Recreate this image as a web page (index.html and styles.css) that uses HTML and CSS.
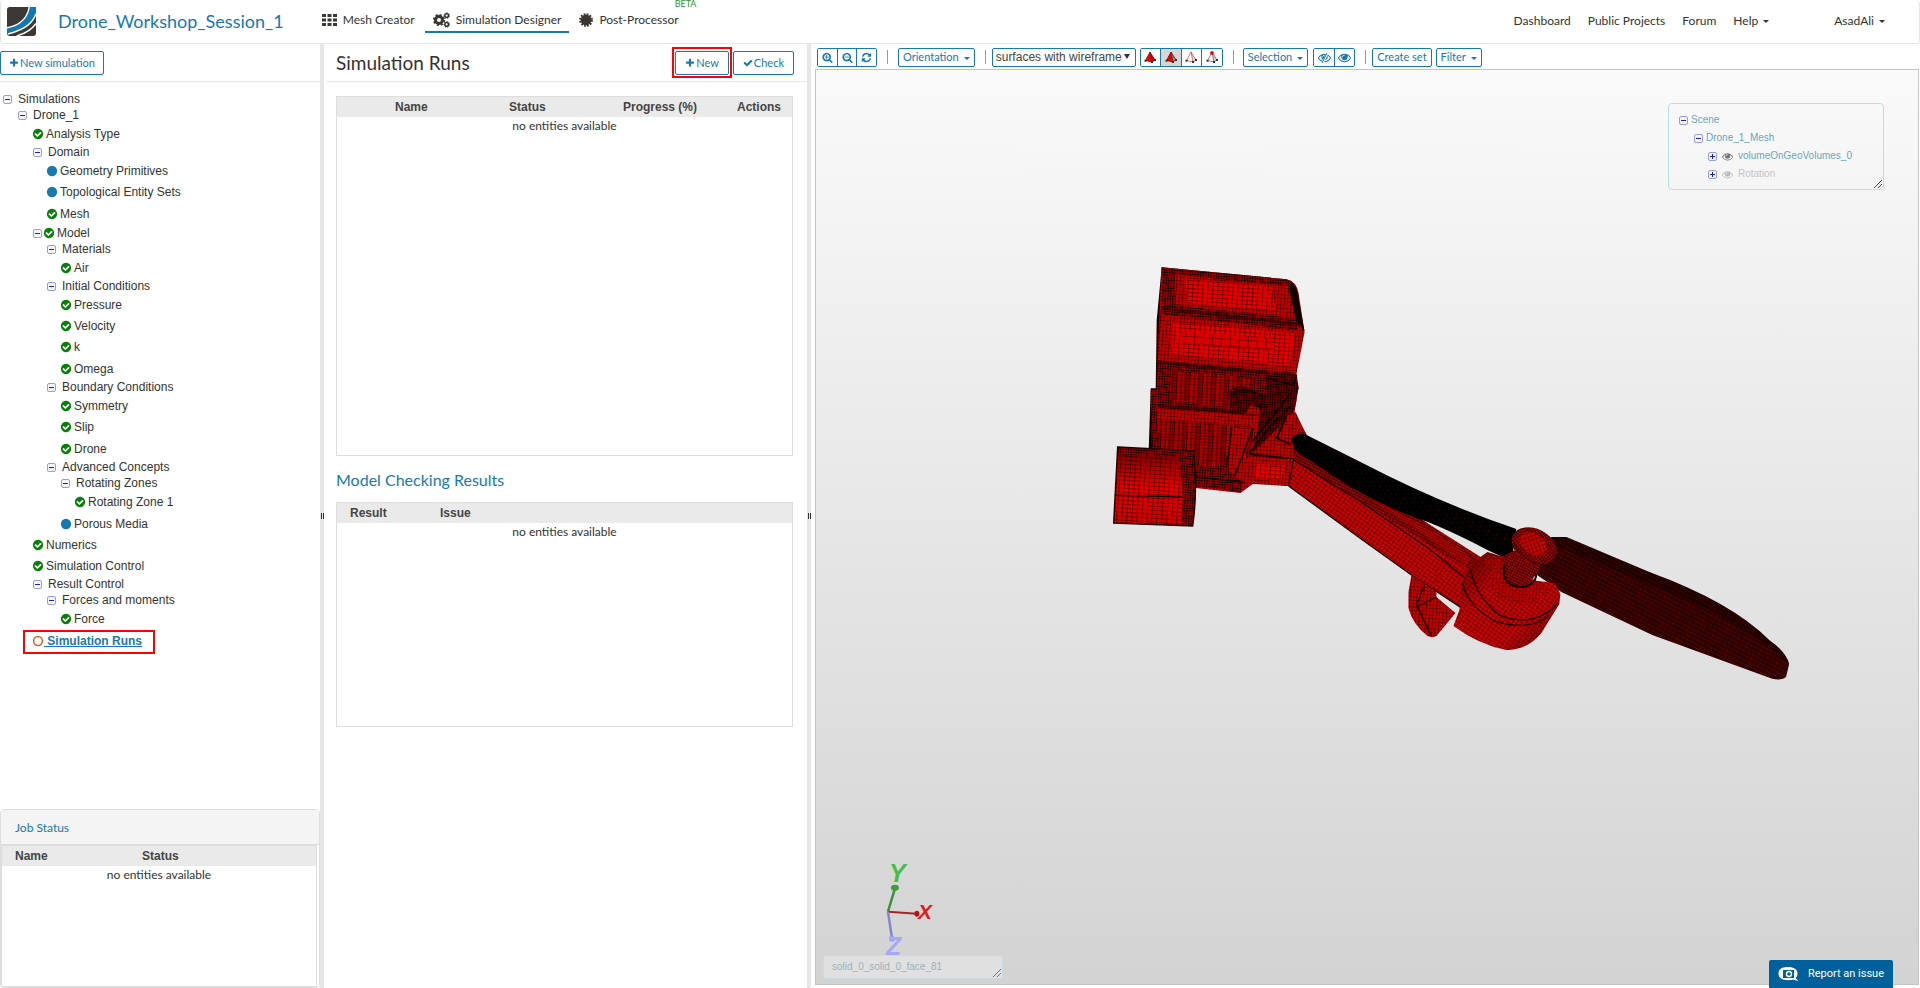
FILE: index.html
```html
<!DOCTYPE html>
<html lang="en">
<head>
<meta charset="utf-8">
<title>Drone_Workshop_Session_1</title>
<link rel="stylesheet" href="styles.css">
</head>
<body>
<svg class="sprite" aria-hidden="true">
  <symbol id="ok" viewBox="0 0 1792 1792"><path d="M1412 734q0-28-18-46l-91-90q-19-19-45-19t-45 19l-408 407-226-226q-19-19-45-19t-45 19l-91 90q-18 18-18 46 0 27 18 45l362 362q19 19 45 19 27 0 46-19l543-543q18-18 18-45zm252 162q0 209-103 385.5t-279.5 279.5-385.5 103-385.5-103-279.5-279.5-103-385.5 103-385.5 279.5-279.5 385.5-103 385.5 103 279.5 279.5 103 385.5z"/></symbol>
  <symbol id="dot" viewBox="0 0 1792 1792"><circle cx="896" cy="896" r="768"/></symbol>
  <symbol id="ring" viewBox="0 0 1792 1792"><circle cx="896" cy="896" r="656" fill="none" stroke="currentColor" stroke-width="224"/></symbol>
  <symbol id="plus" viewBox="0 0 1792 1792"><path d="M1600 736v192q0 40-28 68t-68 28h-416v416q0 40-28 68t-68 28h-192q-40 0-68-28t-28-68v-416h-416q-40 0-68-28t-28-68v-192q0-40 28-68t68-28h416v-416q0-40 28-68t68-28h192q40 0 68 28t28 68v416h416q40 0 68 28t28 68z"/></symbol>
  <symbol id="check" viewBox="0 0 1792 1792"><path d="M1671 566q0 40-28 68l-724 724-136 136q-28 28-68 28t-68-28l-136-136-362-362q-28-28-28-68t28-68l136-136q28-28 68-28t68 28l294 295 656-657q28-28 68-28t68 28l136 136q28 28 28 68z"/></symbol>
  <symbol id="refresh" viewBox="0 0 1792 1792"><path d="M1639 1056q0 5-1 7-64 268-268 434.5t-478 166.5q-146 0-282.5-55t-243.5-157l-129 129q-19 19-45 19t-45-19-19-45v-448q0-26 19-45t45-19h448q26 0 45 19t19 45-19 45l-137 137q71 66 161 102t187 36q134 0 250-65t186-179q11-17 53-117 8-23 30-23h192q13 0 22.5 9.5t9.5 22.5zm25-800v448q0 26-19 45t-45 19h-448q-26 0-45-19t-19-45 19-45l138-138q-148-137-349-137-134 0-250 65t-186 179q-11 17-53 117-8 23-30 23h-199q-13 0-22.5-9.5t-9.5-22.5v-7q65-268 270-434.5t480-166.5q146 0 284 55.5t245 156.5l130-129q19-19 45-19t45 19 19 45z"/></symbol>
  <symbol id="lens" viewBox="0 0 1792 1792"><path d="M1216 832q0-185-131.500-316.500t-316.500-131.500-316.500 131.500-131.500 316.500 131.500 316.500 316.500 131.500 316.500-131.500 131.500-316.500zm512 832q0 53-37.500 90.500t-90.500 37.500q-54 0-90-38l-343-342q-179 124-399 124-143 0-273.500-55.500t-225-150-150-225-55.500-273.500 55.500-273.500 150-225 225-150 273.500-55.500 273.500 55.500 225 150 150 225 55.500 273.500q0 220-124 399l343 343q37 37 37 90z"/></symbol>
  <symbol id="eye" viewBox="0 0 1792 1792"><path d="M1664 960q-152-236-381-353 61 104 61 225 0 185-131.500 316.500t-316.500 131.500-316.500-131.500-131.500-316.500q0-121 61-225-229 117-381 353 133 205 333.500 326.500t434.500 121.500 434.500-121.500 333.500-326.500zm-720-384q0-20-14-34t-34-14q-125 0-214.500 89.500t-89.500 214.500q0 20 14 34t34 14 34-14 14-34q0-86 61-147t147-61q20 0 34-14t14-34zm848 384q0 34-20 69-140 230-376.500 368.500t-499.500 138.500-499.500-139-376.500-368q-20-35-20-69t20-69q140-229 376.500-368t499.500-139 499.500 139 376.500 368q20 35 20 69z"/></symbol>
  <symbol id="grid" viewBox="0 0 15 12"><path d="M0 0h4v3H0zM5.500 0h4v3h-4zM11 0h4v3h-4zM0 4.500h4v3H0zM5.500 4.500h4v3h-4zM11 4.500h4v3h-4zM0 9h4v3H0zM5.500 9h4v3h-4zM11 9h4v3h-4z"/></symbol>
  <symbol id="gears" viewBox="0 0 17 16"><g fill="none" stroke="currentColor"><circle cx="6" cy="8" r="3.500" stroke-width="3"/><circle cx="6" cy="8" r="5.200" stroke-width="1.800" stroke-dasharray="2.040 2.040"/><circle cx="13.700" cy="3.600" r="1.800" stroke-width="1.500"/><circle cx="13.700" cy="3.600" r="2.800" stroke-width="1" stroke-dasharray="1.250 1.250"/><circle cx="13.700" cy="12.400" r="1.800" stroke-width="1.500"/><circle cx="13.700" cy="12.400" r="2.800" stroke-width="1" stroke-dasharray="1.250 1.250"/></g></symbol>
  <symbol id="burst" viewBox="0 0 14 14"><circle cx="7" cy="7" r="5.400"/><circle cx="7" cy="7" r="5.900" fill="none" stroke="currentColor" stroke-width="2" stroke-dasharray="1.760 1.330"/></symbol>
  <symbol id="minusbox" viewBox="0 0 9 9"><rect x=".5" y=".5" width="8" height="8" rx="1.500" fill="#f4f4fc" stroke="#98a0d4"/><path d="M2 4.500h5" stroke="#2020b8" stroke-width="1"/></symbol>
  <symbol id="plusbox" viewBox="0 0 9 9"><rect x=".5" y=".5" width="8" height="8" rx="1.500" fill="#f4f4fc" stroke="#98a0d4"/><path d="M2 4.500h5M4.500 2v5" stroke="#2020c8" stroke-width="1"/></symbol>
  <symbol id="pyramid" viewBox="0 0 12 12"><path d="M6 1 1.500 9.500 8 11z" fill="var(--left)"/><path d="M6 1 8 11l3-2z" fill="var(--right)"/><path d="M6 1 1.500 9.500 8 11l3-2zM6 1l2 10" fill="none" stroke="var(--line)" stroke-width=".7"/><path d="M.5 8.700h2v2h-2zM7 10h2v2H7zM10 8h2v2h-2z" fill="#333"/><circle cx="6" cy="1.900" r="1.900" fill="var(--tip)"/></symbol>
</svg>

<header class="navbar">
  <a class="logo" href="#" aria-label="Home"><svg viewBox="0 0 30 30"><rect width="30" height="30" rx="3" fill="#3d3834"/><path d="M30 0v8C26 18 18 22 3 27l-3 1v-6C14 19 21 12 23 0z" fill="#1278b4"/><path d="M23 0C21 12 14 19 0 21.500M30 7C26 18 18 23 1 28M30 17c-4 6-10 10-20 13" fill="none" stroke="#fff" stroke-width="1.500"/></svg></a>
  <a class="project" href="#">Drone_Workshop_Session_1</a>
  <nav class="modes">
    <a class="mode" href="#"><svg class="i-grid"><use href="#grid"/></svg>Mesh Creator</a>
    <a class="mode active" href="#"><svg class="i-gears"><use href="#gears"/></svg>Simulation Designer</a>
    <a class="mode" href="#"><svg class="i-burst"><use href="#burst"/></svg>Post-Processor<sup class="beta">BETA</sup></a>
  </nav>
  <nav class="links">
    <a href="#">Dashboard</a><a href="#">Public Projects</a><a href="#">Forum</a><a href="#">Help<i class="caret"></i></a><a class="user" href="#">AsadAli<i class="caret"></i></a>
  </nav>
</header>

<main class="workspace">
  <aside class="sidebar">
    <div class="bar"><button class="btn"><svg><use href="#plus"/></svg>New simulation</button></div>
    <ul class="tree">
      <li class="node"><div class="folder"><svg class="box"><use href="#minusbox"/></svg>Simulations</div>
      <ul class="wide">
        <li class="node"><div class="folder"><svg class="box"><use href="#minusbox"/></svg>Drone_1</div>
        <ul class="wide">
          <li class="leaf"><svg class="ok"><use href="#ok"/></svg>Analysis Type</li>
          <li class="node"><div class="folder"><svg class="box"><use href="#minusbox"/></svg>Domain</div>
            <ul>
              <li class="leaf"><svg class="dot"><use href="#dot"/></svg>Geometry Primitives</li>
              <li class="leaf"><svg class="dot"><use href="#dot"/></svg>Topological Entity Sets</li>
              <li class="leaf"><svg class="ok"><use href="#ok"/></svg>Mesh</li>
            </ul></li>
          <li class="node"><div class="folder model"><svg class="box"><use href="#minusbox"/></svg><svg class="ok"><use href="#ok"/></svg>Model</div>
            <ul>
              <li class="node"><div class="folder"><svg class="box"><use href="#minusbox"/></svg>Materials</div>
                <ul><li class="leaf"><svg class="ok"><use href="#ok"/></svg>Air</li></ul></li>
              <li class="node"><div class="folder"><svg class="box"><use href="#minusbox"/></svg>Initial Conditions</div>
                <ul>
                  <li class="leaf"><svg class="ok"><use href="#ok"/></svg>Pressure</li>
                  <li class="leaf"><svg class="ok"><use href="#ok"/></svg>Velocity</li>
                  <li class="leaf"><svg class="ok"><use href="#ok"/></svg>k</li>
                  <li class="leaf"><svg class="ok"><use href="#ok"/></svg>Omega</li>
                </ul></li>
              <li class="node"><div class="folder"><svg class="box"><use href="#minusbox"/></svg>Boundary Conditions</div>
                <ul>
                  <li class="leaf"><svg class="ok"><use href="#ok"/></svg>Symmetry</li>
                  <li class="leaf"><svg class="ok"><use href="#ok"/></svg>Slip</li>
                  <li class="leaf"><svg class="ok"><use href="#ok"/></svg>Drone</li>
                </ul></li>
              <li class="node"><div class="folder"><svg class="box"><use href="#minusbox"/></svg>Advanced Concepts</div>
                <ul>
                  <li class="node"><div class="folder"><svg class="box"><use href="#minusbox"/></svg>Rotating Zones</div>
                    <ul><li class="leaf"><svg class="ok"><use href="#ok"/></svg>Rotating Zone 1</li></ul></li>
                  <li class="leaf"><svg class="dot"><use href="#dot"/></svg>Porous Media</li>
                </ul></li>
            </ul></li>
          <li class="leaf"><svg class="ok"><use href="#ok"/></svg>Numerics</li>
          <li class="leaf"><svg class="ok"><use href="#ok"/></svg>Simulation Control</li>
          <li class="node"><div class="folder"><svg class="box"><use href="#minusbox"/></svg>Result Control</div>
            <ul>
              <li class="node"><div class="folder"><svg class="box"><use href="#minusbox"/></svg>Forces and moments</div>
                <ul><li class="leaf"><svg class="ok"><use href="#ok"/></svg>Force</li></ul></li>
            </ul></li>
          <li class="leaf"><a class="current" href="#"><svg class="ring"><use href="#ring"/></svg><span>&nbsp;Simulation Runs</span></a></li>
        </ul></li>
      </ul></li>
    </ul>
    <section class="jobs">
      <h3>Job Status</h3>
      <div class="tablebox jobbox">
        <table>
          <thead><tr><th class="c-job">Name</th><th>Status</th></tr></thead>
          <tbody><tr><td colspan="2">no entities available</td></tr></tbody>
        </table>
      </div>
    </section>
  </aside>

  <div class="splitter"><i></i></div>

  <section class="runs">
    <div class="bar runbar">
      <h2>Simulation Runs</h2>
      <button class="btn marked"><svg><use href="#plus"/></svg>New</button>
      <button class="btn"><svg><use href="#check"/></svg>Check</button>
    </div>
    <div class="tablebox runbox">
      <table>
        <thead><tr><th class="c-tick"></th><th class="c-run">Name</th><th class="c-run">Status</th><th class="c-run">Progress (%)</th><th>Actions</th></tr></thead>
        <tbody><tr><td colspan="5">no entities available</td></tr></tbody>
      </table>
    </div>
    <h3>Model Checking Results</h3>
    <div class="tablebox checkbox">
      <table>
        <thead><tr><th class="c-result">Result</th><th>Issue</th></tr></thead>
        <tbody><tr><td colspan="2">no entities available</td></tr></tbody>
      </table>
    </div>
  </section>

  <div class="splitter"><i></i></div>

  <section class="viewer">
    <div class="toolbar">
      <div class="group zoom">
        <button aria-label="Zoom in"><svg viewBox="0 0 13 13"><use href="#lens"/><path d="M3 6h5M5.500 3.500v5" stroke="currentColor"/></svg></button>
        <button aria-label="Zoom out"><svg viewBox="0 0 13 13"><use href="#lens"/><path d="M3 6h5" stroke="currentColor"/></svg></button>
        <button aria-label="Refresh"><svg><use href="#refresh"/></svg></button>
      </div>
      <i class="sep"></i>
      <button class="tool">Orientation<i class="caret"></i></button>
      <i class="sep"></i>
      <div class="toolset">
        <div class="picker"><select aria-label="Render mode"><option>surfaces with wireframe</option></select><i></i></div>
        <div class="group pick">
          <button class="p-volume" aria-label="Pick volumes"><svg><use href="#pyramid"/></svg></button>
          <button class="p-face on" aria-label="Pick faces"><svg><use href="#pyramid"/></svg></button>
          <button class="p-edge" aria-label="Pick edges"><svg><use href="#pyramid"/></svg></button>
          <button class="p-node" aria-label="Pick nodes"><svg><use href="#pyramid"/></svg></button>
        </div>
      </div>
      <i class="sep"></i>
      <div class="toolset wide-set">
        <button class="tool">Selection<i class="caret"></i></button>
        <div class="group eyes">
          <button aria-label="Hide selection"><svg viewBox="0 0 13 13"><use href="#eye"/><path d="M9.500 2 4.500 12" stroke="#fff" stroke-width="2"/><path d="M9 2 4 12" stroke="currentColor"/></svg></button>
          <button aria-label="Show all"><svg><use href="#eye"/></svg></button>
        </div>
      </div>
      <i class="sep"></i>
      <div class="toolset">
        <button class="tool">Create set</button>
        <button class="tool">Filter<i class="caret"></i></button>
      </div>
    </div>

    <div class="viewport">
      <svg class="scene" viewBox="816 70 1103 914" role="img" aria-label="Drone mesh">
        <defs>
          <pattern id="m2" width="2.600" height="2.600" patternUnits="userSpaceOnUse" patternTransform="rotate(4)"><rect width="3" height="3" fill="#a00000"/><path d="M0 0h3M0 0v3" stroke="#000" stroke-width="1.200"/></pattern>
          <pattern id="m3" width="3.400" height="3.400" patternUnits="userSpaceOnUse" patternTransform="rotate(4)"><rect width="4" height="4" fill="#c40000"/><path d="M0 0h4M0 0v4" stroke="#200" stroke-width="1"/></pattern>
          <pattern id="m5" width="5" height="4" patternUnits="userSpaceOnUse" patternTransform="rotate(4)"><rect width="5" height="4" fill="#e80000"/><path d="M0 0h5M0 0v4" stroke="#200" stroke-width="1.100"/></pattern>
          <pattern id="m9" width="9" height="7" patternUnits="userSpaceOnUse" patternTransform="rotate(4)"><rect width="9" height="7" fill="#d80000"/><path d="M0 0h9M0 0v7" stroke="#300" stroke-width="1"/></pattern>
          <pattern id="mv" width="13" height="3" patternUnits="userSpaceOnUse" patternTransform="rotate(3)"><rect width="13" height="3" fill="#b80000"/><rect x="8" width="5" height="3" fill="#8c0000"/><path d="M0 0h13M4 0v3M8 0v3M12.500 0v3" stroke="#200" stroke-width=".9"/></pattern>
          <pattern id="arm" width="4" height="3.600" patternUnits="userSpaceOnUse" patternTransform="rotate(35)"><rect width="4" height="4" fill="#d00000"/><path d="M0 0h4M0 0v4" stroke="#200" stroke-width="1"/></pattern>
          <pattern id="armd" width="2.600" height="2.600" patternUnits="userSpaceOnUse" patternTransform="rotate(25)"><rect width="3" height="3" fill="#b00000"/><path d="M0 0h3M0 0v3" stroke="#100" stroke-width="1.100"/></pattern>
          <pattern id="blade" width="5" height="4" patternUnits="userSpaceOnUse" patternTransform="rotate(27)"><rect width="5" height="4" fill="#800000"/><path d="M0 0h5M0 2h5M0 0l2.500 2M5 2 2.500 4M3 0v2M1 2v2" stroke="#000" stroke-width=".9"/></pattern>
          <pattern id="dark" width="9" height="5" patternUnits="userSpaceOnUse" patternTransform="rotate(27)"><rect width="9" height="5" fill="#000"/><rect x="1" y="1" width="1" height="1" fill="#500"/><rect x="6" y="3" width="1" height="1" fill="#300"/></pattern>
          <linearGradient id="shade" x1="0" x2="1" y1="0" y2="1"><stop offset="0" stop-color="#000" stop-opacity=".6"/><stop offset=".35" stop-color="#000" stop-opacity="0"/><stop offset=".7" stop-color="#000" stop-opacity="0"/><stop offset="1" stop-color="#000" stop-opacity=".55"/></linearGradient>
          <linearGradient id="rim" x1="0" x2="0" y1="0" y2="1"><stop offset="0" stop-color="#000" stop-opacity=".5"/><stop offset=".5" stop-color="#000" stop-opacity="0"/><stop offset="1" stop-color="#000" stop-opacity=".1"/></linearGradient>
        </defs>
        <!-- rear edge and body -->
        <path d="M1162 267 1157 320 1156 388h-5l-2 62 30 6 10-180z" fill="#1a0000"/>
        <path d="M1151 390h8v60l-7-2z" fill="url(#m2)"/>
        <path d="M1162 267 1287 279Q1297 281 1299 293L1305 332 1297 373 1299 387 1295 412 1310 440 1289 486 1253 484 1241 493 1196 488 1160 452 1157 410 1158 350z" fill="url(#m3)"/>
        <path d="M1162 267 1287 279Q1296 282 1298 292L1302 322 1163 307z" fill="url(#m2)"/>
        <path d="M1175 274 1289 286 1296 318 1176 305z" fill="url(#m3)"/>
        <path d="M1186 278 1272 287 1277 311 1187 302z" fill="url(#m5)"/>
        <path d="M1290 281q7 4 8 12l7 38-8-10-7-30z" fill="#120000"/>
        <path d="M1163 307 1298 322v8L1162 314z" fill="url(#m2)"/>
        <path d="M1173 322 1296 333 1290 366 1172 353z" fill="url(#m5)"/>
        <path d="M1183 330 1275 339v12L1182 342z" fill="url(#m9)"/>
        <path d="M1158 360 1295 373 1297 400 1294 414 1253 416 1158 409z" fill="url(#m2)"/>
        <path d="M1171 370 1257 378 1255 410 1171 402z" fill="url(#mv)"/>
        <path d="M1160 362 1270 373M1158 405 1256 414M1162 308 1300 324" stroke="#200" stroke-width="3" opacity=".55" fill="none"/>
        <path d="M1159 416 1256 426 1241 490 1196 484 1160 450z" fill="url(#mv)"/>
        <path d="M1157 408 1257 417 1254 427 1158 419z" fill="url(#m3)"/>
        <path d="M1230 390q14-7 22-1l14 6-4 14-14 6-18-8zM1268 376q12-8 28-2l3 14-6 25-40 40 8-38z" fill="url(#m2)"/>
        <path d="M1230 390q14-7 22-1l14 6-4 14-14 6-18-8zM1268 376q12-8 28-2l3 14-6 25-40 40 8-38z" fill="#100" opacity=".35"/>
        <path d="M1231 394q14-8 32 2l-3 15M1292 392 1253 441M1270 379l24 6 3-10M1290 407l-20 20-20 26" fill="none" stroke="#0c0000" stroke-width="1.500"/>
        <path d="M1250 405 1260 408 1259 415 1247 413z" fill="url(#m3)"/>
        <path d="M1233 428h19l-10 53-14-11z" fill="url(#m3)"/>
        <path d="M1253 428 1233 482M1232 427l-5 43" stroke="#100" stroke-width="1.500"/>
        <path d="M1196 464l20 4 11-12 2 15 14 12-2 9-45-6z" fill="url(#m2)"/>
        <path d="M1196 477 1244 482" stroke="#000" stroke-width="1.500"/>
        <path d="M1287 416 1296 412 1308 438 1296 440z" fill="url(#m3)"/>
        <path d="M1285 420l-8 18 14 6M1250 454 1294 459" stroke="#100" stroke-width="2" fill="none"/>
        <!-- camera -->
        <path d="M1118 447 1194 451Q1198 490 1193 526L1114 523z" fill="url(#m5)"/>
        <path d="M1118 447 1194 451Q1198 490 1193 526L1114 523z" fill="url(#rim)"/>
        <path d="M1118 447 1194 451 1195 458 1117 454zM1179 451 1194 452Q1199 490 1193 526L1181 525 1184 505z" fill="url(#m2)"/>
        <path d="M1118 447 1194 451Q1198 490 1193 526L1114 523z" fill="none" stroke="#200" stroke-width="1.500"/>
        <path d="M1115 495 1183 497" stroke="#100" stroke-width="1.200"/>
        <!-- arm -->
        <path d="M1243 458 1294 459 1289 486 1243 481z" fill="url(#m3)"/><path d="M1257 464 1285 465 1282 479 1256 477z" fill="url(#m5)"/>
        <path d="M1293 452 1294 460 1289 486 1363 540 1412 575 1462 608 1486 560 1423 520 1330 468z" fill="url(#arm)"/>
        <path d="M1293 450 1345 468 1423 520 1478 558 1471 570 1430 545 1360 500 1294 460z" fill="url(#armd)"/>
        <path d="M1350 485 1440 535 1472 558 1466 566 1425 535z" fill="#f00000" opacity=".3"/>
        <path d="M1294 460 1360 501 1430 549 1467 579M1289 486 1363 540 1412 575 1462 608M1294 459l-5 27" fill="none" stroke="#100" stroke-width="1.200"/>
        <path d="M1292 440Q1294 432 1305 434L1363 463Q1440 503 1517 529L1513 557 1503 557 1488 550Q1450 530 1423 520 1370 502 1325 470L1295 450z" fill="url(#dark)"/>
        <!-- hook -->
        <path d="M1412 575 1437 592 1437 597 1456 613 1437 636Q1433 638 1428 636 1413 624 1409 608L1409 592z" fill="url(#m3)"/>
        <path d="M1425 585l-8 20 15 31M1437 597l-20 10" stroke="#100" stroke-width="1.200" fill="none"/>
        <!-- rotor blade -->
        <path d="M1535 573 1552 537 1567 537 1650 572Q1732 602 1770 640 1787 652 1790 664L1787 677Q1783 681 1773 679L1653 635 1562 592z" fill="url(#blade)"/>
        <path d="M1552 537 1567 537 1650 572Q1732 602 1770 640 1787 652 1790 664 1740 618 1650 585 1600 562 1552 545z" fill="#000" opacity=".3"/>
        <!-- motor -->
        <path d="M1463 583Q1465 568 1488 552L1504 557 1530 580 1556 583 1561 594 1560 604 1542 633Q1528 650 1507 650 1480 645 1454 626L1460 610z" fill="url(#arm)"/>
        <path d="M1463 583Q1465 568 1488 552L1504 557 1530 580 1556 583 1561 594 1560 604 1542 633Q1528 650 1507 650 1480 645 1454 626L1460 610z" fill="url(#shade)"/>
        <path d="M1471 570Q1478 600 1502 616 1535 628 1558 604M1463 583Q1468 606 1495 621 1528 632 1549 616" fill="none" stroke="#100" stroke-width="1.200"/>
        <path d="M1484 560l10 12-8 10 16 18 30 4 20-14-20-12-15 8-16-9 1-20z" fill="url(#m3)" opacity=".6"/>
        <path d="M1503 556 1516 550 1542 566 1534 578Q1530 590 1508 583L1504 578z" fill="url(#armd)"/>
        <path d="M1505 565q-4 22 18 22 14-2 14-14" fill="none" stroke="#100" stroke-width="2"/>
        <ellipse cx="1535" cy="546" rx="24" ry="17" transform="rotate(28 1535 546)" fill="url(#armd)"/>
        <ellipse cx="1534" cy="544" rx="15" ry="10" transform="rotate(35 1534 544)" fill="url(#arm)"/>
        <path d="M1514 541q5 18 28 24 14 0 15-12" fill="none" stroke="#200" stroke-width="1"/>
        <!-- axis triad -->
        <g class="axes"><path d="M888 912 895 889" stroke="#3d8f42" stroke-width="2.500"/><ellipse cx="895" cy="888" rx="4" ry="3" fill="#3aa03e"/><path d="M888 912 917 914" stroke="#a02828" stroke-width="2"/><ellipse cx="917" cy="914" rx="2.500" ry="3" fill="#b01818"/><path d="M888 912 892 938" stroke="#8585cc" stroke-width="2.500"/><circle cx="892" cy="939" r="3" fill="#9a9af0"/>
        <text x="889" y="882" font-size="25" fill="#44bf48">Y</text><text x="918" y="919" font-size="21" fill="#e01c1c">X</text><text x="886" y="955" font-size="25" fill="#a8a8fa">Z</text></g>
      </svg>
      <div class="scenetree">
        <ul>
          <li><svg class="box"><use href="#minusbox"/></svg>Scene</li>
          <li class="d1"><svg class="box"><use href="#minusbox"/></svg>Drone_1_Mesh</li>
          <li class="d2"><svg class="box"><use href="#plusbox"/></svg><svg class="vis"><use href="#eye"/></svg>volumeOnGeoVolumes_0</li>
          <li class="d2 off"><svg class="box"><use href="#plusbox"/></svg><svg class="vis"><use href="#eye"/></svg>Rotation</li>
        </ul>
        <svg class="grip" viewBox="0 0 8 8"><path d="M0 8 8 0M4 8l4-4" stroke="#555" stroke-width="1"/></svg>
      </div>
      <div class="hover">solid_0_solid_0_face_81<svg class="grip" viewBox="0 0 8 8"><path d="M0 8 8 0M4 8l4-4" stroke="#777" stroke-width="1"/></svg></div>
    </div>
    <button class="report"><svg viewBox="0 0 22 16"><path d="M10 1c6 0 9.500 2.500 9.500 6.500 0 2-.8 3.500-2 4.500l3 3-5-1.300C14 14 12 14.200 10 14.200 4 14.200.500 12 .500 7.500S4 1 10 1z" fill="#fff"/><path d="M5 4h11v8H5z" fill="#00609c"/><circle cx="11" cy="8" r="3.200" fill="#fff"/><circle cx="11" cy="8" r="1.800" fill="#00609c"/></svg>Report an issue</button>
  </section>
</main>
</body>
</html>
```
FILE: styles.css
```css
* { box-sizing: border-box; }
body { margin: 0; min-height: 100vh; display: flex; flex-direction: column; background: #fff; color: #333; font: 12px/18px Lato, sans-serif; }
a { color: inherit; text-decoration: none; }
ul { list-style: none; margin: 0; padding: 0; }
h2, h3 { margin: 0; font-weight: 400; }
button { font: inherit; cursor: pointer; }
svg { fill: currentColor; flex: none; }
.sprite { position: absolute; width: 0; height: 0; }
.caret { display: inline-block; border: 3px solid transparent; border-top-color: currentColor; border-bottom: 0; margin-left: 5px; vertical-align: middle; }

.navbar { display: flex; align-items: center; height: 44px; padding: 0 34px 1px 6px; border: 1px solid #e6e6e6; border-top: 0; border-radius: 4px; }
.logo { width: 29px; height: 29px; margin-right: 22px; }
.logo svg { display: block; width: 29px; height: 29px; }
.project { color: #1779ae; font-size: 18px; margin-right: 30px; }
.modes { display: flex; gap: 2px; }
.mode { position: relative; display: flex; align-items: center; height: 23px; padding: 0 8px; border-bottom: 2px solid transparent; }
.mode.active { border-color: #1779ae; }
.mode svg { color: #3a3733; margin-right: 6px; }
.i-grid { width: 15px; height: 12px; }
.i-gears { width: 17px; height: 16px; }
.i-burst { width: 14px; height: 14px; }
.beta { position: absolute; left: 100%; top: -12px; margin-left: -12px; font-size: 9px; line-height: 12px; color: #2c962c; }
.links { display: flex; gap: 17px; margin-left: auto; }
.links .user { margin-left: 48px; }

.workspace { flex: 1; display: flex; }
.sidebar { width: 320px; display: flex; flex-direction: column; }
.splitter { width: 4px; background: #e6e6e6; display: flex; align-items: center; }
.splitter i { width: 3px; height: 6px; margin-left: 1px; border: 1px solid #333; border-width: 0 1px; }
.runs { width: 483px; }
.viewer { flex: 1; min-width: 0; display: flex; flex-direction: column; padding: 3px 1px 3px 4px; position: relative; }

.bar { display: flex; align-items: center; height: 38px; border-bottom: 1px solid #e6e6e6; }
.btn { display: inline-flex; align-items: center; gap: 1px; height: 24px; padding: 0 8px; border: 1px solid #1779ae; border-radius: 2px; background: #fff; color: #1779ae; font-size: 11px; position: relative; }
.btn svg { width: 10px; height: 10px; }
.runbar { margin-left: 3px; padding: 0 13px 0 9px; gap: 4px; }
.runbar .btn { padding: 0 9px; }
.runbar h2 { font-size: 19px; margin-right: auto; color: #333; }
.marked::after { content: ""; position: absolute; inset: -5px -4px -4px -4px; border: 2px solid #f00; }

.tree { flex: 1; padding: 9px 0 0 3px; font: 12px/16px "Liberation Sans", Arial, sans-serif; }
.tree ul { padding-left: 14px; }
.tree ul.wide { padding-left: 15px; }
.folder { display: flex; align-items: center; height: 16px; gap: 6px; }
.folder.model { gap: 2px; margin-top: 1px; }
.leaf { display: flex; align-items: center; height: 21px; gap: 2px; }
.leaf:not(:first-child):last-child { margin-top: 1px; }
.box { width: 9px; height: 9px; }
.ok, .dot, .ring { width: 12px; height: 12px; margin-left: -1px; }
.ok { color: #068006; }
.dot { color: #1779ae; }
.ring { color: #e05a20; }
.current { position: relative; display: flex; align-items: center; color: #1779ae; font-weight: 700; }
.current span { text-decoration: underline; }
.current::after { content: ""; position: absolute; inset: -3px -13px -5px -10px; border: 2px solid #f00; }

.tablebox { border: 1px solid #ddd; }
table { width: 100%; border-collapse: collapse; table-layout: fixed; }
th { height: 20px; padding: 0 0 0 13px; background: #eaeaea; text-align: left; font: bold 12px/18px "Liberation Sans", Arial, sans-serif; color: #444; }
td { padding: 0; height: 18px; text-align: center; }
.c-tick { width: 45px; }
.c-run { width: 114px; }
.c-result { width: 90px; }
.c-job { width: 127px; }
.jobs { border: 1px solid #ddd; border-radius: 4px; }
.jobs h3 { height: 35px; padding: 0 14px; line-height: 36px; font-size: 12px; color: #1779ae; background: #f4f4f4; border-bottom: 1px solid #ddd; }
.jobbox { height: 142px; margin-right: 2px; }
.runbox { min-height: 360px; margin: 14px 14px 0 12px; }
.runs h3 { margin: 14px 12px 12px; font-size: 16px; line-height: 20px; color: #1779ae; }
.runs .checkbox { min-height: 225px; margin: 0 14px 0 12px; }

.toolbar { display: flex; align-items: center; gap: 10px; height: 20px; padding-left: 2px; margin-bottom: 2px; }
.group { display: flex; border: 1px solid #1779ae; border-radius: 2px; }
.group button { flex: 1; display: flex; align-items: center; justify-content: center; height: 17px; padding: 0; border: 0; background: #fff; color: #1779ae; }
.group button + button { border-left: 1px solid #1779ae; }
.group svg { width: 11px; height: 11px; }
.zoom { width: 60px; }
.pick { width: 83px; }
.pick svg { width: 12px; height: 12px; }
.group .on { background: #d6d6d6; }
.eyes { width: 42px; }
.eyes svg { width: 13px; height: 13px; }
.sep { width: 1px; height: 14px; background: #999; }
.tool { height: 19px; padding: 0 4px; border: 1px solid #1779ae; border-radius: 2px; background: #fff; color: #1779ae; font-size: 11px; line-height: 16px; white-space: nowrap; }
.toolset { display: flex; align-items: center; gap: 4px; margin-left: -4px; }
.wide-set { gap: 5px; margin-left: -1px; }
.picker { position: relative; }
.picker select { appearance: none; display: block; width: 144px; height: 19px; padding: 0 3px; border: 1px solid #1779ae; border-radius: 2px; background: #fff; color: #444; font: 12px/16px "Liberation Sans", Arial, sans-serif; }
.picker i { position: absolute; right: 6px; top: 6px; border: 3px solid transparent; border-top: 5px solid #333; border-bottom: 0; }
.p-volume { --left: #e00; --right: #c00; --line: #600; --tip: transparent; }
.p-face { --left: #e00; --right: #888; --line: #600; --tip: transparent; }
.p-edge { --left: #fff; --right: #ddd; --line: #c44; --tip: transparent; }
.p-node { --left: #eee; --right: #ccc; --line: #666; --tip: #f00; }

.viewport { flex: 1; position: relative; border: 1px solid #c4c4c4; background: linear-gradient(#fafafa, #d3d3d3); }
.scene { position: absolute; inset: 0; width: 100%; height: 100%; }
.axes { font: italic bold 25px "Liberation Sans", Arial, sans-serif; }
.scenetree { position: absolute; top: 33px; right: 34px; width: 216px; height: 87px; padding: 7px 10px; border: 1px solid #b9dfea; border-radius: 4px; color: #6ba6c4; font: 10px/18px "Liberation Sans", Arial, sans-serif; }
.scenetree li { display: flex; align-items: center; gap: 3px; height: 18px; }
.scenetree .d1 { padding-left: 15px; }
.scenetree .d2 { padding-left: 29px; gap: 5px; }
.scenetree .off { color: #c4c4c4; }
.vis { width: 11px; height: 11px; color: #777; }
.off .vis { color: #bbb; }
.grip { position: absolute; right: 1px; bottom: 1px; width: 8px; height: 8px; }
.hover { position: absolute; left: 7px; bottom: 5px; width: 180px; height: 24px; padding: 0 8px; border: 1px solid #c8dde2; border-radius: 3px; background: #e0e0e0; color: #9db3bd; font: 10px/22px "Liberation Sans", Arial, sans-serif; }
.report { position: absolute; right: 27px; bottom: 0; display: flex; align-items: center; gap: 8px; height: 28px; padding: 0 9px; border: 0; border-radius: 2px 2px 0 0; background: #00609c; color: #fff; font: 11px/16px Roboto, sans-serif; }
.report svg { width: 22px; height: 16px; }
```
